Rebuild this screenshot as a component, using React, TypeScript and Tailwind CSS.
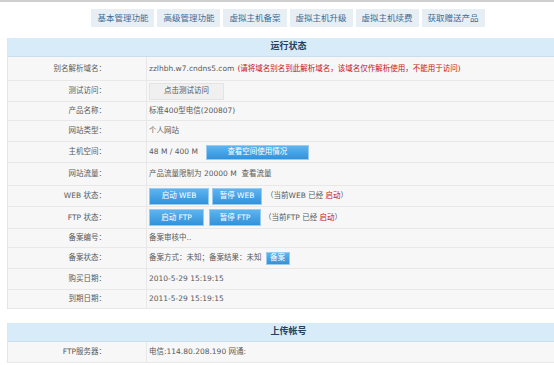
import React from "react";

const FONT = { fontFamily: '"DejaVu Sans", "Noto Sans CJK SC", sans-serif' };

const TABS = ["基本管理功能", "高级管理功能", "虚拟主机备案", "虚拟主机升级", "虚拟主机续费", "获取赠送产品"];

function BlueButton({ children, className = "" }: { children: React.ReactNode; className?: string }) {
  return (
    <span
      className={`inline-flex items-center justify-center border border-[#9acbf0] bg-gradient-to-b from-[#5db4ef] to-[#3292da] text-white text-[7.5px] leading-none ${className}`}
    >
      {children}
    </span>
  );
}

function Row({ label, h = "h-[21px]", children }: { label: string; h?: string; children: React.ReactNode }) {
  return (
    <div className={`grid grid-cols-[139px_1fr] border-b border-[#e8e8e8] ${h}`}>
      <div className="flex items-center justify-end pr-[40px] border-r border-[#e8e8e8] text-[#5a5a5a]">{label}：</div>
      <div className="flex items-center pl-[2px] text-[#5a5a5a] whitespace-nowrap">{children}</div>
    </div>
  );
}

function SectionHead({ title }: { title: string }) {
  return (
    <div className="h-[19px] flex items-center justify-center bg-[#d8ebf8] border-b border-[#c9dfef] text-[9px] font-bold text-[#233f5c]">
      {title}
    </div>
  );
}

export default function App() {
  return (
    <div className="w-[554px] h-[365px] overflow-hidden bg-white text-[7.5px]" style={FONT}>
      <div className="h-[2px] bg-[#cfcfcf]" />
      <div className="w-[576px]">
        {/* tabs */}
        <div className="flex justify-center gap-[3px] pt-[7px]">
          {TABS.map((t) => (
            <div key={t} className="h-[18px] px-[6px] flex items-center bg-[#e7eff5] text-[8.5px] text-[#3d6c96]">
              {t}
            </div>
          ))}
        </div>

        {/* 运行状态 */}
        <div className="ml-[7px] w-[562px] mt-[11px] bg-[#f7f7f7] border-l border-[#dde6ee]">
          <SectionHead title="运行状态" />
          <Row label="别名解析域名" h="h-[24px]">
            <span>zzlhbh.w7.cndns5.com</span>
            <span className="ml-[3px] text-[#c81414]">(请将域名别名到此解析域名，该域名仅作解析使用，不能用于访问)</span>
          </Row>
          <Row label="测试访问">
            <span className="inline-flex items-center justify-center w-[75px] h-[17px] bg-[#f0f0f0] border border-[#e4e4e4] text-[#555]">
              点击测试访问
            </span>
          </Row>
          <Row label="产品名称" h="h-[19px]">标准400型电信(200807)</Row>
          <Row label="网站类型">个人网站</Row>
          <Row label="主机空间">
            <span>48 M / 400 M</span>
            <BlueButton className="ml-[8px] w-[103px] h-[15px]">查看空间使用情况</BlueButton>
          </Row>
          <Row label="网站流量" h="h-[23px]">
            <span>产品流量限制为 20000 M</span>
            <span className="ml-[5px]">查看流量</span>
          </Row>
          <Row label="WEB 状态">
            <BlueButton className="w-[60px] h-[17px]">启动 WEB</BlueButton>
            <BlueButton className="ml-[3px] w-[50px] h-[17px]">暂停 WEB</BlueButton>
            <span className="ml-[4px]">（当前WEB 已经 <span className="text-[#c81414]">启动</span>）</span>
          </Row>
          <Row label="FTP 状态" h="h-[22px]">
            <BlueButton className="w-[55px] h-[17px]">启动 FTP</BlueButton>
            <BlueButton className="ml-[5px] w-[52px] h-[17px]">暂停 FTP</BlueButton>
            <span className="ml-[3px]">（当前FTP 已经 <span className="text-[#c81414]">启动</span>）</span>
          </Row>
          <Row label="备案编号" h="h-[19px]">备案审核中..</Row>
          <Row label="备案状态">
            <span>备案方式：未知；备案结果：未知</span>
            <BlueButton className="ml-[4px] w-[24px] h-[13px]">备案</BlueButton>
          </Row>
          <Row label="购买日期">2010-5-29 15:19:15</Row>
          <Row label="到期日期" h="h-[19px]">2011-5-29 15:19:15</Row>
        </div>

        {/* 上传帐号 */}
        <div className="ml-[7px] w-[562px] mt-[14px] bg-[#f7f7f7] border-l border-[#dde6ee]">
          <SectionHead title="上传帐号" />
          <Row label="FTP服务器">电信:114.80.208.190 网通:</Row>
        </div>
      </div>
    </div>
  );
}
